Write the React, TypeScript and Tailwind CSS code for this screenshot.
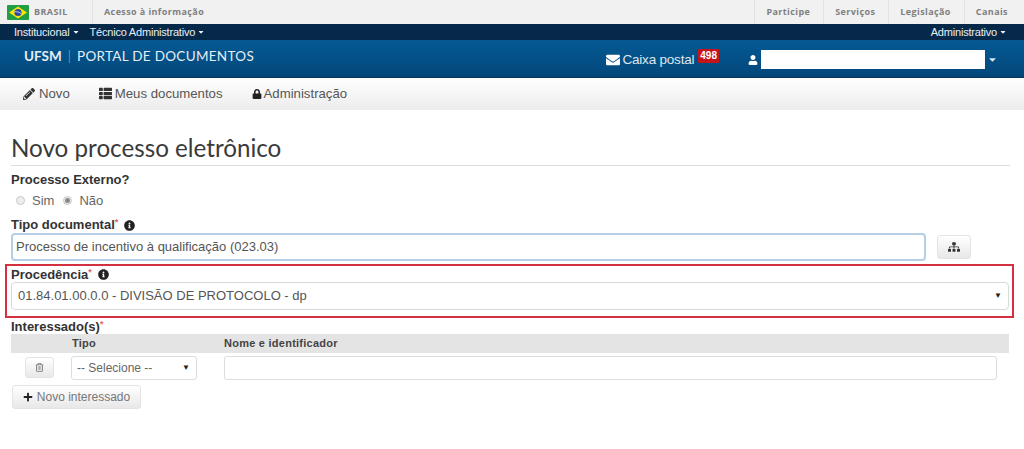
import { FaCaretDown, FaEnvelope, FaInfoCircle, FaLock, FaPencilAlt, FaPlus, FaSitemap, FaThList, FaUser } from "react-icons/fa"
import { FaRegTrashCan } from "react-icons/fa6"

const topLinks = ["Participe", "Serviços", "Legislação", "Canais"]

const Flag = () => (
    <svg width="22" height="15" viewBox="0 0 22 15" className="rounded-[1px]">
        <rect width="22" height="15" fill="#229e45" />
        <path d="M11 1.6 20 7.5 11 13.4 2 7.5Z" fill="#f8e509" />
        <circle cx="11" cy="7.5" r="3.6" fill="#2b49a3" />
        <path d="M7.6 6.8c2.400-.3 4.900.4 6.700 1.900" stroke="#fff" strokeWidth="0.7" fill="none" />
    </svg>
)

const Required = () => <sup className="text-[#e4606d] text-[9px] top-[-4px]">*</sup>

const Caret = () => (
    <span className="absolute right-[7px] top-1/2 -translate-y-1/2 text-[8px] leading-none text-[#222] pointer-events-none">▼</span>
)

const Radio = ({ checked }: { checked?: boolean }) => (
    <span className="w-[9px] h-[9px] rounded-full border border-[#c8c8c8] bg-[#eee] flex items-center justify-center">
        {checked && <span className="w-[5px] h-[5px] rounded-full bg-[#8a8a8a]" />}
    </span>
)

export default function App() {
    return (
        <div className="w-[1024px] h-[449px] overflow-hidden bg-white font-['Liberation_Sans',Arial,sans-serif] text-[#333]">
            <div className="h-[24px] bg-[#f1f1f1] flex items-stretch font-['Open_Sans',sans-serif] font-bold text-[9px] tracking-[0.4px] text-[#7f7f7f]">
                <div className="w-[93px] flex items-center gap-[5px] pl-[7px] border-r border-[#e2e2e2]">
                    <Flag />
                    <span>BRASIL</span>
                </div>
                <div className="pl-[11px] flex items-center">Acesso à informação</div>
                <div className="ml-auto flex items-stretch pr-[3px]">
                    {topLinks.map((l) => (
                        <div key={l} className="pl-[11px] pr-[13px] flex items-center border-l border-[#e2e2e2]">{l}</div>
                    ))}
                </div>
            </div>

            <div className="h-[16px] bg-[#06294a] flex items-center justify-between pl-[14px] pr-[17px] text-[11px] tracking-[-0.2px] text-[#e8eef4]">
                <div className="flex gap-[10px]">
                    <span className="flex items-center gap-[2px]">Institucional <FaCaretDown size={8} /></span>
                    <span className="flex items-center gap-[2px]">Técnico Administrativo <FaCaretDown size={8} /></span>
                </div>
                <span className="flex items-center gap-[2px]">Administrativo <FaCaretDown size={8} /></span>
            </div>

            <div className="h-[38px] bg-linear-to-b from-[#045a94] to-[#03477a] border-b border-[#0a3355] flex items-center pl-[24px] pr-[26px] text-[#e6edf3]">
                <div className="flex items-center text-[13.5px] -mt-[5px] font-['Lato',sans-serif]">
                    <span className="font-bold">UFSM</span>
                    <span className="mx-[6px] text-[#9fc0d8] font-light">|</span>
                    <span className="tracking-[0.3px]">PORTAL DE DOCUMENTOS</span>
                </div>
                <div className="ml-auto mt-[2px] flex items-center">
                    <FaEnvelope size={14} className="text-white" />
                    <span className="ml-[2px] mt-[1px] text-[13.5px] tracking-[-0.2px] text-[#dfe8ef]">Caixa postal</span>
                    <span className="ml-[4px] -mt-[8px] bg-[#c4141c] rounded-[1px] px-[2px] text-[10px] font-bold leading-[14px] text-white">498</span>
                    <FaUser size={10} className="ml-[29px] text-white" />
                    <div className="ml-[3px] w-[224px] h-[19px] bg-white" />
                    <FaCaretDown size={11} className="ml-[2px] text-[#dbe6ee]" />
                </div>
            </div>

            <div className="h-[32px] bg-linear-to-b from-white to-[#ececec] flex items-center pl-[23px] gap-[29px] text-[13.2px] text-[#555]">
                <span className="flex items-center gap-[4px]"><FaPencilAlt size={12} className="text-[#333]" />Novo</span>
                <span className="flex items-center gap-[3px]"><FaThList size={13} className="text-[#333]" />Meus documentos</span>
                <span className="flex items-center gap-[2px]"><FaLock size={10} className="text-[#222]" />Administração</span>
            </div>

            <div className="px-[11px] pt-[21px]">
                <h1 className="font-['Lato',sans-serif] text-[24.2px] leading-[34px] text-[#3a3a3a] border-b border-[#ddd] w-[999px]">Novo processo eletrônico</h1>

                <div className="mt-[7px] text-[13px] leading-[14px] font-bold">Processo Externo?</div>
                <div className="mt-[6px] flex items-center gap-[7px] text-[13px] leading-[15px] text-[#666] pl-[5px]">
                    <Radio /><span>Sim</span>
                    <span className="ml-[2px]"><Radio checked /></span><span>Não</span>
                </div>

                <div className="mt-[10px] flex items-center gap-[6px] text-[13px] leading-[14px] font-bold">
                    <span>Tipo documental<Required /></span>
                    <FaInfoCircle size={11} className="text-[#222]" />
                </div>
                <div className="mt-[1px] flex items-center gap-[11px]">
                    <div className="w-[915px] h-[28px] border-2 border-[#b5cfe6] rounded-[4px] flex items-center pl-[3px] text-[13px] text-[#555]">Processo de incentivo à qualificação (023.03)</div>
                    <button className="w-[34px] h-[24px] flex items-center justify-center rounded-[3px] border border-[#e4e4e4] bg-linear-to-b from-white to-[#e8e8e8] text-[#333]">
                        <FaSitemap size={12} />
                    </button>
                </div>

                <div className="-ml-[6px] mt-[3px] w-[1009px] h-[54px] border-2 border-[#d5303f] pl-[4px] pr-[3px] pt-[1px]">
                    <div className="flex items-center gap-[6px] text-[13px] leading-[14px] font-bold h-[15px]">
                        <span>Procedência<Required /></span>
                        <FaInfoCircle size={11} className="text-[#222]" />
                    </div>
                    <div className="relative">
                        <select defaultValue="dp" className="w-[998px] h-[28px] appearance-none border border-[#d8d8d8] rounded-[4px] pl-[6px] text-[13px] text-[#555] bg-white">
                            <option value="dp">01.84.01.00.0.0 - DIVISÃO DE PROTOCOLO - dp</option>
                        </select>
                        <Caret />
                    </div>
                </div>

                <div className="mt-[1px] text-[13px] leading-[15px] font-bold">Interessado(s)<Required /></div>
                <div className="w-[998px] h-[19px] bg-[#e4e4e4] flex items-center text-[11px] tracking-[0.25px] font-bold text-[#444]">
                    <span className="ml-[61px] w-[152px]">Tipo</span>
                    <span>Nome e identificador</span>
                </div>
                <div className="mt-[2px] flex items-center">
                    <button className="ml-[14px] w-[29px] h-[21px] flex items-center justify-center rounded-[3px] border border-[#e4e4e4] bg-linear-to-b from-white to-[#e8e8e8] text-[#777]">
                        <FaRegTrashCan size={9} />
                    </button>
                    <div className="relative ml-[17px] w-[126px]">
                        <select defaultValue="" className="w-[126px] h-[24px] appearance-none border border-[#ddd] rounded-[3px] pl-[5px] text-[12px] text-[#666] bg-white">
                            <option value="">-- Selecione --</option>
                        </select>
                        <Caret />
                    </div>
                    <div className="ml-[27px] w-[773px] h-[24px] border border-[#ddd] rounded-[3px]" />
                </div>
                <button className="mt-[5px] ml-[1px] w-[129px] h-[24px] flex items-center justify-center gap-[4px] rounded-[3px] border border-[#e4e4e4] bg-linear-to-b from-white to-[#e8e8e8] text-[12px] text-[#777]">
                    <FaPlus size={10} className="text-[#222]" />Novo interessado
                </button>
            </div>
        </div>
    )
}
